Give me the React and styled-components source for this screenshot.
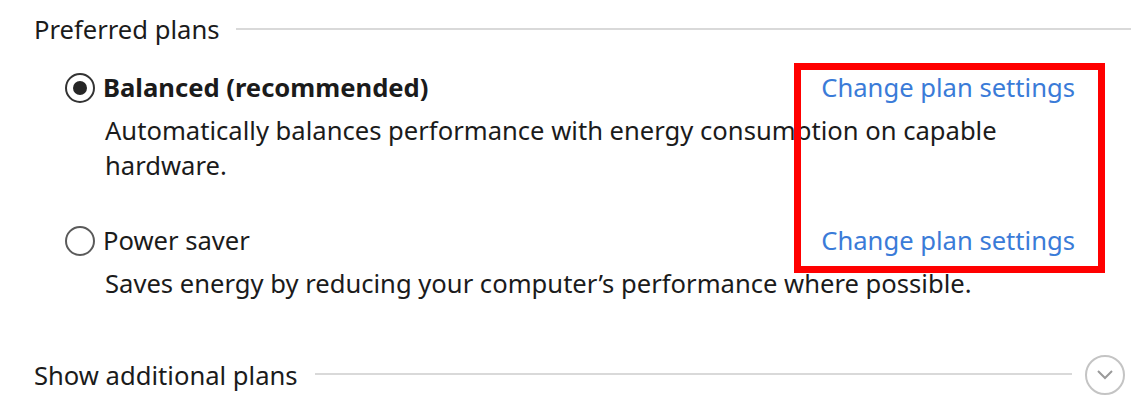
import React from 'react';
import styled, { createGlobalStyle } from 'styled-components';

const GlobalStyle = createGlobalStyle`
  html, body {
    margin: 0;
    padding: 0;
    background: #ffffff;
  }
  body {
    font-family: 'Noto Sans', 'Open Sans', sans-serif;
    color: #1b1b1b;
  }
`

const Page = styled.div`
  position: relative;
  width: 1131px;
  height: 408px;
  overflow: hidden;
  padding: 12px 0 0 34px;
  box-sizing: border-box;
  font-size: 25.6px;
  line-height: 35px;
`

const SectionHeader = styled.div`
  display: flex;
  align-items: center;
  gap: 17px;
  margin-top: ${p => p.top || 0}px;
`

const SectionTitle = styled.span`
  white-space: nowrap;
`

const Rule = styled.div`
  flex: 1;
  height: 2px;
  margin-top: -2px;
  background: #d9d9d9;
  margin-right: ${p => p.right || 0}px;
`

const PlanList = styled.div`
  display: flex;
  flex-direction: column;
  gap: 40px;
  margin-top: 23px;
  padding-left: 31px;
  width: 1010px;
`

const Plan = styled.div`
  display: grid;
  grid-template-columns: 30px 1fr auto;
  column-gap: 8px;
  row-gap: 8px;
  align-items: center;
`

const Radio = styled.span`
  width: 30px;
  height: 30px;
  box-sizing: border-box;
  border-radius: 50%;
  border: 2px solid ${p => (p.checked ? '#333' : '#5a5a5a')};
  display: flex;
  align-items: center;
  justify-content: center;
  &::after {
    content: '';
    width: 14px;
    height: 14px;
    border-radius: 50%;
    background: ${p => (p.checked ? '#262626' : 'transparent')};
  }
`

const PlanName = styled.span`
  font-weight: ${p => (p.bold ? 700 : 400)};
`

const Link = styled.a`
  color: #3a7bd8;
  text-decoration: none;
  cursor: pointer;
`

const Description = styled.p`
  grid-column: 2 / 4;
  margin: 0 0 0 2px;
  max-width: 920px;
`

const ExpandButton = styled.span`
  width: 40px;
  height: 40px;
  box-sizing: border-box;
  border: 2px solid #c4c4c4;
  border-radius: 50%;
  display: flex;
  align-items: center;
  justify-content: center;
  margin-right: 6px;
`

const Highlight = styled.div`
  position: absolute;
  left: 794px;
  top: 63px;
  width: 311px;
  height: 210px;
  box-sizing: border-box;
  border: 7px solid #ff0000;
  pointer-events: none;
`

const plans = [
  {
    name: 'Balanced (recommended)',
    checked: true,
    text: 'Automatically balances performance with energy consumption on capable hardware.',
  },
  {
    name: 'Power saver',
    checked: false,
    text: "Saves energy by reducing your computer\u2019s performance where possible.",
  },
]

export default function App() {
  return (
    <Page>
      <GlobalStyle />
      <SectionHeader>
        <SectionTitle>Preferred plans</SectionTitle>
        <Rule />
      </SectionHeader>
      <PlanList>
        {plans.map(plan => (
          <Plan key={plan.name}>
            <Radio checked={plan.checked} />
            <PlanName bold={plan.checked}>{plan.name}</PlanName>
            <Link>Change plan settings</Link>
            <Description>{plan.text}</Description>
          </Plan>
        ))}
      </PlanList>
      <SectionHeader top={54}>
        <SectionTitle>Show additional plans</SectionTitle>
        <Rule right={-4} />
        <ExpandButton>
          <svg width="20" height="12" viewBox="0 0 20 12">
            <path d="M3 2 L10 9 L17 2" fill="none" stroke="#9a9a9a" strokeWidth="2" />
          </svg>
        </ExpandButton>
      </SectionHeader>
      <Highlight />
    </Page>
  );
}
